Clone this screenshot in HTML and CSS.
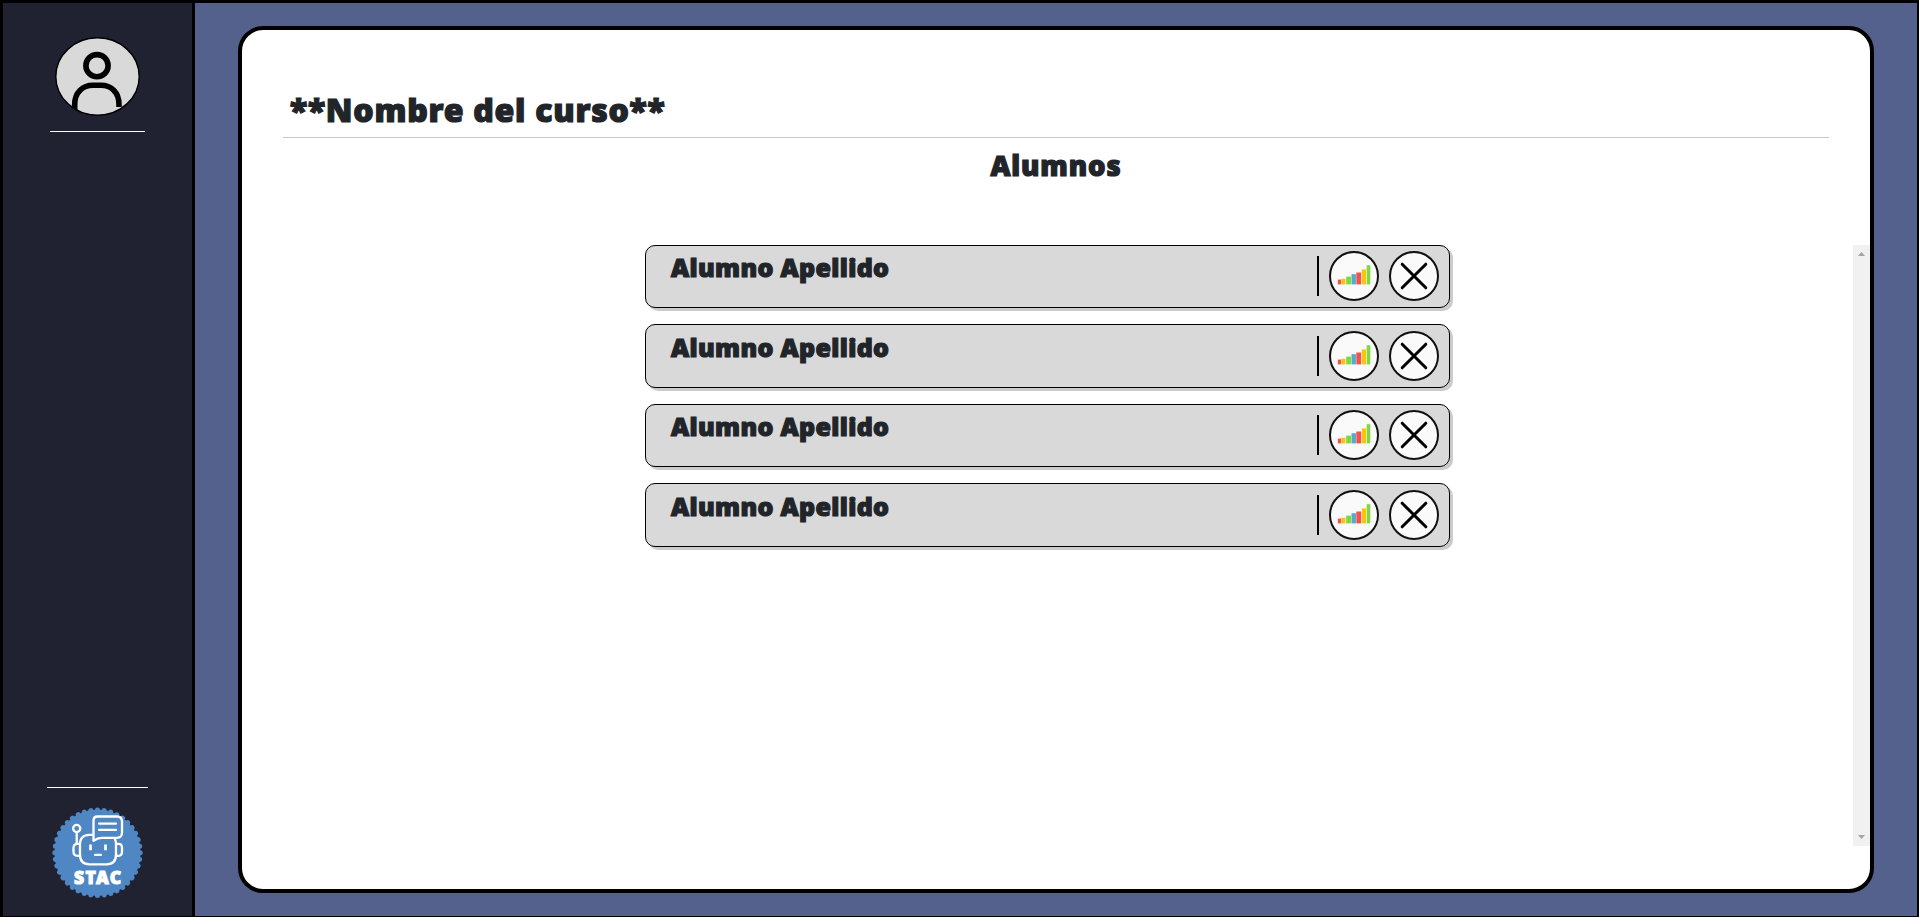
FILE: index.html
```
<!DOCTYPE html>
<html lang="es">
<head>
<meta charset="utf-8">
<title>Alumnos</title>
<link rel="stylesheet" href="styles.css">
</head>
<body>
<svg width="0" height="0" class="defs">
  <symbol id="stats" viewBox="2 2 46 46">
    <rect x="8.800" y="28.600" width="3.200" height="4.800" fill="#ee5450"/>
    <rect x="12.300" y="27.800" width="4.200" height="5.600" fill="#fdc20f"/>
    <rect x="17.200" y="25.600" width="4.800" height="7.800" fill="#7ed93f"/>
    <rect x="22.500" y="23.200" width="4.400" height="10.200" fill="#55a9cc"/>
    <rect x="27.300" y="21.500" width="4.800" height="11.900" fill="#f0524d"/>
    <rect x="32.800" y="18.400" width="4.200" height="15" fill="#fdc20f"/>
    <rect x="37.700" y="14.200" width="3.600" height="19.200" fill="#7ed93f"/>
  </symbol>
  <symbol id="close" viewBox="2 2 46 46">
    <path d="M13.200 13.200 36.800 36.800M36.800 13.200 13.200 36.800" stroke="#000" stroke-width="3" stroke-linecap="round"/>
  </symbol>
</svg>
<div class="app">
  <aside class="sidebar">
    <svg class="avatar" viewBox="0 0 85 79">
      <defs><clipPath id="face"><ellipse cx="42.5" cy="39.5" rx="41.7" ry="38.7"/></clipPath></defs>
      <ellipse cx="42.5" cy="39.5" rx="41.7" ry="38.7" fill="#d9d9d9" stroke="#000" stroke-width="1.4"/>
      <g clip-path="url(#face)" fill="none" stroke="#000" stroke-width="5.6">
        <circle cx="42" cy="28.7" r="11.1"/>
        <path d="M19.700 74V67.500C19.700 55 28 48.300 38 48.300H46C56 48.300 64 55 64 67.500V70"/>
      </g>
    </svg>
    <hr class="rule rule-top">
    <hr class="rule rule-bottom">
    <svg class="logo" viewBox="0.5 0.2 92 92">
      <circle cx="46" cy="46" r="43.200" fill="#4f87c4"/>
      <circle cx="46" cy="46" r="42.700" fill="none" stroke="#4f87c4" stroke-width="5" stroke-linecap="round" pathLength="400" stroke-dasharray="0.010 9.990"/>
      <g fill="none" stroke="#fff" stroke-width="2.300" stroke-linejoin="round" stroke-linecap="round">
        <path d="M41 28H38Q28.500 28 28.500 37.500V48Q28.500 57.500 38 57.500H55Q64.500 57.500 64.500 48V37.500Q64.500 34.500 63.500 32.500"/>
        <path d="M28 37H26Q22 37 22 41V45Q22 49 26 49H28M65 37H67Q70.500 37 70.500 41V45Q70.500 49 67 49H65M25.200 37V25.500"/>
        <circle cx="25.200" cy="21.700" r="3.600"/>
        <path d="M46 9.700H65.500Q70.500 9.700 70.500 14.700V26Q70.500 31 65.500 31H50Q46 31 42 34V14Q42 9.700 46 9.700Z"/>
        <path d="M47.500 16.800H64.500M47.500 23H64.500M43.500 48H49.500"/>
        <path stroke-width="2.700" stroke-linecap="butt" d="M39 37.800V43.500M54 37.800V43.500"/>
      </g>
      <text class="logo-text" x="22.600" y="77.600" textLength="47" lengthAdjust="spacing">STAC</text>
    </svg>
  </aside>
  <main class="content">
    <section class="card">
      <h1 class="course">**Nombre del curso**</h1>
      <h2 class="subtitle">Alumnos</h2>
      <div class="list-area">
        <ul class="students">
          <li class="student"><span class="name">Alumno Apellido</span><span class="divider"></span><svg class="btn"><use href="#stats"/></svg><svg class="btn"><use href="#close"/></svg></li>
          <li class="student"><span class="name">Alumno Apellido</span><span class="divider"></span><svg class="btn"><use href="#stats"/></svg><svg class="btn"><use href="#close"/></svg></li>
          <li class="student"><span class="name">Alumno Apellido</span><span class="divider"></span><svg class="btn"><use href="#stats"/></svg><svg class="btn"><use href="#close"/></svg></li>
          <li class="student"><span class="name">Alumno Apellido</span><span class="divider"></span><svg class="btn"><use href="#stats"/></svg><svg class="btn"><use href="#close"/></svg></li>
        </ul>
        <div class="scrollbar">
          <svg width="7" height="4" viewBox="0 0 7 4"><path d="M0 4 3.500 0 7 4Z" fill="#a3a3a3"/></svg>
          <svg width="7" height="4" viewBox="0 0 7 4"><path d="M0 0 3.500 4 7 0Z" fill="#a3a3a3"/></svg>
        </div>
      </div>
    </section>
  </main>
</div>
</body>
</html>
```
FILE: styles.css
```
* { box-sizing: border-box; }
body {
  margin: 0;
  font-family: "Noto Sans", "Open Sans", sans-serif;
  font-weight: 900;
  color: #212529;
}
.defs { position: absolute; }
.app {
  display: flex;
  height: 917px;
  background: #55618d;
  border: solid #000;
  border-width: 3px 2px 1px 3px;
}
.sidebar {
  width: 192px;
  flex: none;
  display: flex;
  flex-direction: column;
  align-items: center;
  background: #212231;
  border-right: 3px solid #000;
  padding: 34px 0 17px;
}
.avatar { width: 85px; height: 79px; flex: none; }
.rule { height: 1px; border: 0; background: #fff; flex: none; }
.rule-top { width: 95px; margin: 15px 0 0; }
.rule-bottom { width: 101px; margin: auto 0 19px; }
.logo { width: 92px; height: 92px; flex: none; }
.logo-text {
  font-size: 17.5px;
  fill: #fff;
  stroke: #fff;
  stroke-width: 1px;
}
.content { flex: 1; padding: 23px 43px; }
.card {
  height: 867px;
  background: #fff;
  border: 4px solid #000;
  border-radius: 25px;
  padding-top: 61px;
}
.course, .subtitle, .name { -webkit-text-stroke: 1.2px #212529; }
.course {
  margin: 0 41px;
  padding-left: 7px;
  height: 47px;
  border-bottom: 1px solid #c8c9ca;
  font-size: 32px;
  font-weight: 900;
  line-height: 38px;
  letter-spacing: .75px;
}
.subtitle {
  margin: 11px 0 62px;
  font-size: 27.5px;
  font-weight: 900;
  line-height: 34px;
  letter-spacing: .9px;
  text-align: center;
}
.list-area { display: flex; height: 601px; }
.students {
  flex: 1;
  margin: 0;
  padding: 0 403px;
  list-style: none;
  display: flex;
  flex-direction: column;
  gap: 16px;
}
.student {
  display: flex;
  height: 63.4px;
  padding: 5.4px 10px 0 25px;
  background: #d9d9d9;
  border: 1px solid #000;
  border-radius: 10px;
  box-shadow: 3px 3px 0 #cbcbcb;
}
.name {
  flex: 1;
  font-size: 25px;
  line-height: 33px;
  letter-spacing: .35px;
}
.divider {
  width: 2px;
  height: 40px;
  margin-top: 5px;
  background: #000;
}
.btn {
  width: 50px;
  height: 50px;
  margin-left: 10px;
  background: #fafafa;
  border: 2px solid #111;
  border-radius: 50%;
}
.scrollbar {
  width: 17px;
  background: #f1f1f1;
  display: flex;
  flex-direction: column;
  align-items: center;
  justify-content: space-between;
  padding: 7px 0;
}
```
